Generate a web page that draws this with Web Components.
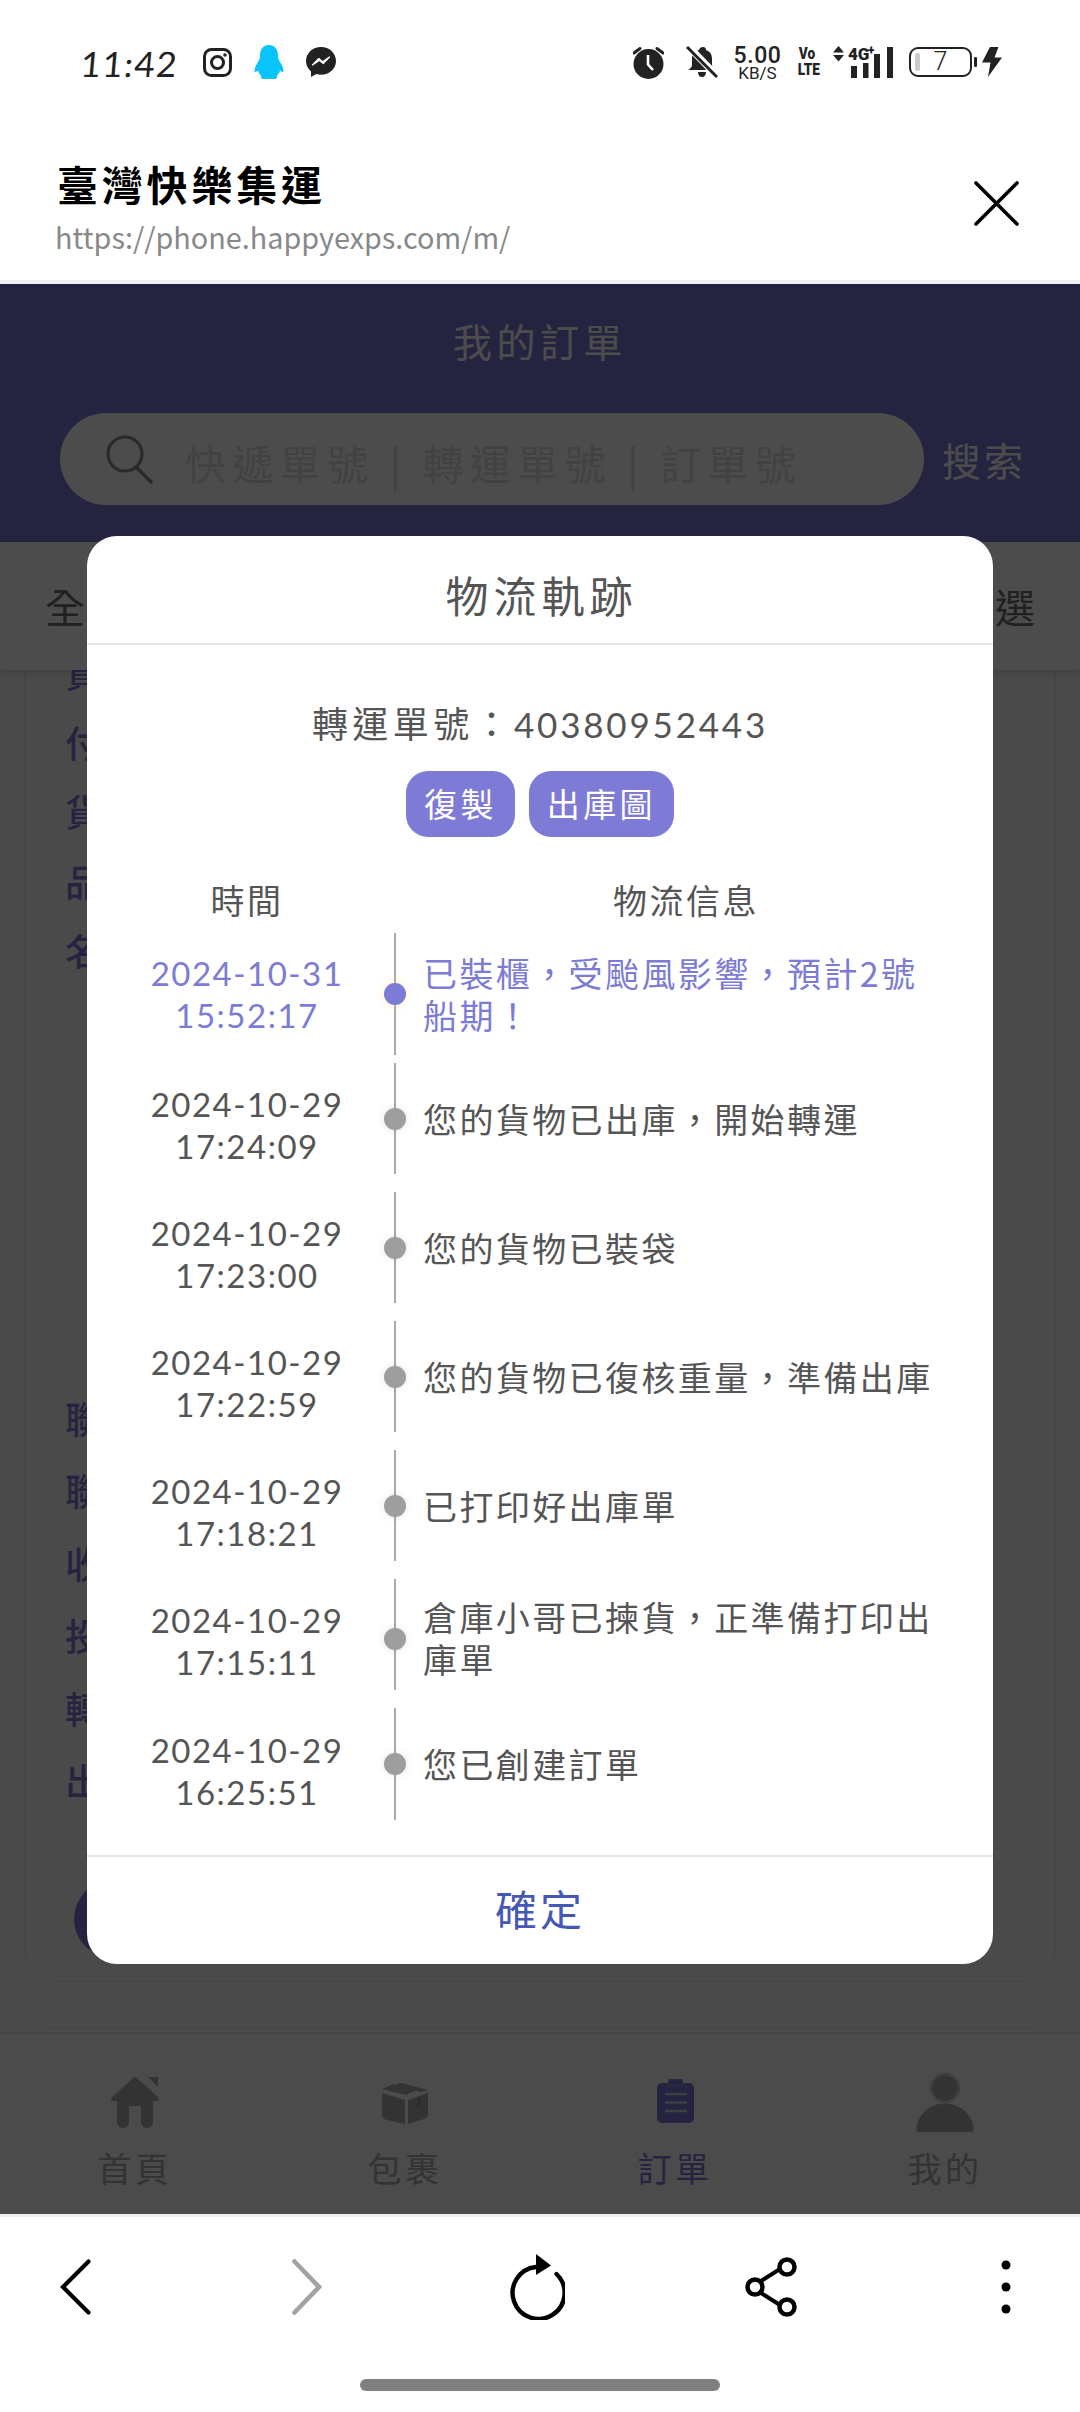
<!DOCTYPE html>
<html lang="zh-Hant">
<head>
<meta charset="utf-8">
<title>物流軌跡</title>
<style>
html,body{margin:0;padding:0;background:#fff}
body{width:1080px;height:2412px;overflow:hidden;font-family:"Noto Sans CJK SC","Noto Sans CJK TC",sans-serif;display:flex;flex-direction:column}
</style>
</head>
<body>
<phone-status></phone-status>
<browser-head>
  <span slot="title">臺灣快樂集運</span>
  <span slot="url">https://phone.happyexps.com/m/</span>
</browser-head>
<order-page>
  <page-head></page-head>
  <tab-strip><span>全</span><span>選</span></tab-strip>
  <order-list>
    <order-card>
      <card-line>貨</card-line><card-line>付</card-line><card-line>貨</card-line><card-line>品</card-line><card-line>名</card-line>
      <card-line wide class="gap">聯</card-line><card-line wide>聯</card-line><card-line wide>收</card-line><card-line wide>投</card-line><card-line wide>轉</card-line><card-line wide>出</card-line>
    </order-card>
  </order-list>
  <tab-nav></tab-nav>
  <track-modal>
    <span slot="title">物流軌跡</span>
    <span slot="number">轉運單號&#xFF1A;<b style="font-weight:400;font-family:Lato,sans-serif;font-size:35px;letter-spacing:2.800px">40380952443</b></span>
    <track-btn slot="actions">復製</track-btn>
    <track-btn slot="actions">出庫圖</track-btn>
    <span slot="col1">時間</span>
    <span slot="col2">物流信息</span>
    <track-row slot="rows" active first><span slot="time">2024-10-31<br>15:52:17</span>已裝櫃&#xFF0C;受颱風影響&#xFF0C;預計2號船期&#xFF01;</track-row>
    <track-row slot="rows"><span slot="time">2024-10-29<br>17:24:09</span>您的貨物已出庫&#xFF0C;開始轉運</track-row>
    <track-row slot="rows"><span slot="time">2024-10-29<br>17:23:00</span>您的貨物已裝袋</track-row>
    <track-row slot="rows"><span slot="time">2024-10-29<br>17:22:59</span>您的貨物已復核重量&#xFF0C;準備出庫</track-row>
    <track-row slot="rows"><span slot="time">2024-10-29<br>17:18:21</span>已打印好出庫單</track-row>
    <track-row slot="rows" two><span slot="time">2024-10-29<br>17:15:11</span>倉庫小哥已揀貨&#xFF0C;正準備打印出庫單</track-row>
    <track-row slot="rows" last><span slot="time">2024-10-29<br>16:25:51</span>您已創建訂單</track-row>
    <span slot="confirm">確定</span>
  </track-modal>
</order-page>
<browser-bar></browser-bar>
<script>
const def=(name,html)=>customElements.define(name,class extends HTMLElement{
  constructor(){super();this.attachShadow({mode:'open'}).innerHTML=html}
});

def('phone-status',`<style>
:host{display:flex;align-items:center;height:100px;box-sizing:border-box;padding:24px 78px 0 79px;color:#222;flex:none}
.t{width:96px;font-family:Lato,sans-serif;font-size:35px;line-height:44px;letter-spacing:1.500px;white-space:nowrap;margin-top:2px;transform:skewX(-5deg);transform-origin:left bottom}
svg{display:block;flex:none}
.sp{flex:1}
.speed{width:51px;margin-left:14px;text-align:center;font-family:Roboto,sans-serif;color:#222;white-space:nowrap}
.speed div:first-child{font-size:23px;line-height:22px;font-weight:500;letter-spacing:.6px;margin-top:3px}
.speed div:last-child{font-size:17px;line-height:18px;margin-top:-3px}
.volte{width:22px;margin-left:13px;font-family:Roboto,sans-serif;font-weight:900;text-align:center;color:#222}
.volte div{font-size:16px;line-height:16px;transform:scaleX(.85)}
.sig{width:60px;height:32px;margin-left:15px;position:relative;flex:none}
.sig svg{position:absolute;left:0;top:0}
.sig span{position:absolute;font-family:Roboto,sans-serif;font-weight:900;color:#222;line-height:1.2}
.bat{position:relative;margin-left:16px;margin-right:3px;text-align:center;font-family:Roboto,sans-serif;font-weight:300;font-size:25px;line-height:26px;color:#222;flex:none;box-sizing:border-box;border:2.400px solid #222;border-radius:9px;height:30px;width:63px}
.bat::before{content:"";position:absolute;left:4px;top:4px;width:5px;height:18px;border-radius:2px;background:#ccc}
.bat::after{content:"";position:absolute;right:-7px;top:8px;width:3px;height:10px;border-radius:1px;background:#222}
</style>
<span class="t">11:42</span>
<svg style="margin-left:28px" width="29" height="29" viewBox="0 0 29 29"><rect x="1.500" y="1.500" width="26" height="26" rx="7" fill="none" stroke="#222" stroke-width="3"/><circle cx="14.500" cy="14.500" r="6" fill="none" stroke="#222" stroke-width="3"/><circle cx="22" cy="7" r="1.800" fill="#222"/></svg>
<svg style="margin-left:22px" width="30" height="34" viewBox="0 0 30 34"><path d="M15 0C8.500 0 6 5 6 11C6 13 5.500 14.500 4 17C2 20 .5 23 .5 26C.5 27 2 27.500 4 25.500C4.500 28 6 30 7.500 31C6 32 7 34 10 34H20C23 34 24 32 22.500 31C24 30 25.500 28 26 25.500C28 27.500 29.500 27 29.500 26C29.500 23 28 20 26 17C24.500 14.500 24 13 24 11C24 5 21.500 0 15 0Z" fill="#08c4fb"/></svg>
<svg style="margin-left:22px" width="30" height="30" viewBox="0 0 30 30"><path d="M15 0C6.700 0 0 6.200 0 14C0 18.200 1.900 21.800 5 24.400V30L10.300 27.100C11.800 27.600 13.400 27.800 15 27.800C23.300 27.800 30 21.700 30 14C30 6.200 23.300 0 15 0Z" fill="#222"/><path d="M6.500 18L12.800 11.500L16.600 14.800L23.500 10L17.200 16.600L13.400 13.300Z" fill="#fff" stroke="#fff" stroke-width="1.200" stroke-linejoin="round"/></svg>
<span class="sp"></span>
<svg width="31" height="33" viewBox="0 0 31 33"><circle cx="15.500" cy="18" r="15" fill="#222"/><path d="M15 9V18.500L20 24" fill="none" stroke="#fff" stroke-width="2.600"/><path d="M1 7L7 2.500M30 7L24 2.500" stroke="#222" stroke-width="3" stroke-linecap="round"/></svg>
<svg style="margin-left:22px" width="32" height="32" viewBox="0 0 32 32"><path d="M17 1C19 1 20 2 20 4C24.500 5.500 26 9 26 13V19C26 21 28 22.500 29.500 24H2.500C4 22.500 6 21 6 19V12C6 8 9 5 13 4C13.500 2 15 1 17 1ZM12 26H20C20 29 18.500 31 16 31C13.500 31 12 29 12 26Z" fill="#222"/><path d="M1 -1L31 30" stroke="#fff" stroke-width="7"/><path d="M1 1L31 31" stroke="#222" stroke-width="3"/></svg>
<div class="speed"><div>5.00</div><div>KB/S</div></div>
<div class="volte"><div>Vo</div><div>LTE</div></div>
<div class="sig"><svg width="60" height="32" viewBox="0 0 60 32"><path d="M0 6.500L5.500 0L11 6.500ZM0 9L11 9L5.500 15.500Z" fill="#222"/><rect x="18" y="20" width="6" height="12" fill="#222"/><rect x="30" y="17" width="5.500" height="15" fill="#222"/><rect x="41" y="8" width="6" height="24" fill="#222"/><rect x="54" y="1" width="6" height="31" fill="#222"/></svg><span style="left:15px;top:-2px;font-size:17px">4G</span><span style="left:35px;top:-3px;font-size:12px">+</span></div>
<div class="bat">7</div>
<svg style="margin-left:7px" width="20" height="30" viewBox="0 0 20 30"><path d="M8 0H16.500L12.500 10.500H20L6 30L8.500 15.500H0Z" fill="#222"/></svg>`);

def('browser-head',`<style>
:host{display:flex;height:184px;box-sizing:border-box;border-bottom:4px solid #eef0f3;padding:0 61px 0 57px;align-items:flex-start;justify-content:space-between;flex:none;background:#fff}
.col{display:flex;flex-direction:column;margin-top:53px}
.tt{font-size:41px;line-height:60px;font-weight:700;letter-spacing:3.800px;color:#000}
.u{font-size:28.800px;line-height:42px;color:#888;margin-top:3px;margin-left:-2px;white-space:nowrap}
svg{margin-top:81px;display:block}
</style>
<div class="col"><div class="tt"><slot name="title"></slot></div><div class="u"><slot name="url"></slot></div></div>
<svg width="45" height="45" viewBox="0 0 45 45"><path d="M2 2L43 43M43 2L2 43" stroke="#000" stroke-width="3.600" stroke-linecap="round"/></svg>`);

def('order-page',`<style>
:host{display:flex;flex-direction:column;height:1930px;position:relative;background:#f7f7f7;flex:none;overflow:hidden}
</style><slot></slot>`);

def('page-head',`<style>
:host{display:block;height:258px;background:#7d7bd5;flex:none;box-sizing:border-box;padding-top:26px}
.t{text-align:center;color:#fff;font-size:39px;line-height:60px;letter-spacing:4.500px}
.r{display:flex;align-items:center;margin:43px 0 0 60px}
.s{width:864px;height:92px;border-radius:46px;background:#fff;display:flex;align-items:center;box-sizing:border-box;padding-left:44px}
.s svg{display:block;flex:none}
.p{margin-left:31px;margin-top:6px;font-size:41px;line-height:60px;letter-spacing:6.300px;color:#dcdcdc;white-space:nowrap}
.b{margin-left:18px;color:#fff;font-size:39px;line-height:54px;letter-spacing:3px;white-space:nowrap}
</style>
<div class="t">我的訂單</div>
<div class="r"><div class="s"><svg width="50" height="50" viewBox="0 0 50 50"><circle cx="21" cy="20" r="17" fill="none" stroke="#8c8c8c" stroke-width="3.200"/><path d="M32 33L47 48" stroke="#8c8c8c" stroke-width="3.600" stroke-linecap="round"/></svg><span class="p">快遞單號 | 轉運單號 | 訂單號</span></div><span class="b">搜索</span></div>`);

def('tab-strip',`<style>
:host{display:flex;height:128px;flex:none;background:#fff;justify-content:space-between;align-items:center;padding:0 45px;box-sizing:border-box;font-size:40px;color:#6c6c6c;box-shadow:0 3px 8px rgba(0,0,0,.12);position:relative;z-index:1}
</style><slot></slot>`);

def('order-list',`<style>
:host{display:block;flex:1;min-height:0;overflow:hidden;padding:0 24px;box-sizing:border-box}
.next{height:20px;margin-top:46px;border:1.500px solid rgba(0,0,0,.06);border-bottom:none;border-radius:30px 30px 0 0}
</style><slot></slot><div class="next"></div>`);

def('order-card',`<style>
:host{margin-top:-32px;height:1344px;box-sizing:border-box;border:1.500px solid rgba(0,0,0,.06);border-top:none;border-radius:0 0 30px 30px;padding-left:40px;position:relative;display:flex;flex-direction:column}
.rule{height:2px;background:rgba(0,0,0,.05);margin:30px 16px 0 -23px}
.btn{width:830px;height:78px;border-radius:39px;background:#7d7bd5;margin:31px 0 0 9px}
</style><slot></slot><div class="rule"></div><div class="btn"></div>`);

def('card-line',`<style>
:host{display:block;height:69.500px;line-height:69.500px;font-size:37px;font-weight:500;color:#7d7bd5;flex:none;white-space:nowrap}
:host([wide]){height:72.500px;line-height:72.500px}
:host(.gap){margin-top:396px}
</style><slot></slot>`);

const navIcon={
 home:`<svg width="48" height="52" viewBox="0 0 48 52"><path d="M24 3L46 23H2Z" fill="#aaa" stroke="#aaa" stroke-width="4" stroke-linejoin="round"/><path d="M6 22H42V46A6 6 0 0 1 30 46V30H18V46A6 6 0 0 1 6 46Z" fill="#aaa"/><path d="M37 1H47V11Z" fill="#aaa"/></svg>`,
 box:`<svg width="46" height="42" viewBox="0 0 46 42"><path d="M0 10L23 17V41L5 37Q0 36 0 31Z" fill="#aaa"/><path d="M26 17L46 10V31Q46 35 42 36L26 41Z" fill="#aaa"/><path d="M0 6L12 1L35 7L24 12ZM17 0L20 0L46 7L39 9L15 2Z" fill="#aaa"/><path d="M35 15V24L39 22V14" fill="#777" opacity=".5"/></svg>`,
 clip:`<svg width="37" height="44" viewBox="0 0 37 44"><rect x="0" y="4" width="37" height="40" rx="5" fill="#7d7bd5"/><rect x="11" y="0" width="15" height="7" rx="1.500" fill="#7d7bd5" stroke="#fff" stroke-opacity=".2"/><path d="M8 15H30M8 23.500H30M8 32H30" stroke="#d0d0d0" stroke-width="2.600"/></svg>`,
 me:`<svg width="58" height="59" viewBox="0 0 58 59"><circle cx="29" cy="15" r="14.500" fill="none" stroke="#aaa" stroke-width="1"/><circle cx="29" cy="15" r="13" fill="#aaa"/><path d="M1 57C1 42 14 31 29 31C44 31 57 42 57 57C57 58 56 58.500 55 58.500H3C2 58.500 1 58 1 57Z" fill="#aaa" stroke="#aaa" stroke-width="1"/></svg>`
};
def('tab-nav',`<style>
:host{display:grid;grid-template-columns:repeat(4,270px);height:182px;box-sizing:border-box;background:#fbfbfb;border-top:2px solid rgba(0,0,0,.05);flex:none;color:#aaa}
.i{display:flex;flex-direction:column;align-items:center}
.ic{height:62px;margin-top:38px;display:flex;justify-content:center;align-items:flex-start;box-sizing:content-box}
.ic svg{display:block}
.i span{font-size:34px;line-height:46px;letter-spacing:3.500px;margin-top:11px;white-space:nowrap}
.on{color:#7d7bd5}
</style>
<div class="i"><div class="ic" style="padding-top:4px;height:58px">${navIcon.home}</div><span>首頁</span></div>
<div class="i"><div class="ic" style="padding-top:11px;height:51px">${navIcon.box}</div><span>包裹</span></div>
<div class="i on"><div class="ic" style="padding-top:7px;height:55px">${navIcon.clip}</div><span>訂單</span></div>
<div class="i"><div class="ic" style="padding-top:1px;height:61px">${navIcon.me}</div><span>我的</span></div>`);

def('track-modal',`<style>
:host{position:absolute;inset:0;background:rgba(0,0,0,.7);display:block;z-index:5}
.m{position:absolute;left:87px;top:252px;width:906px;height:1428px;background:#fff;border-radius:30px;display:flex;flex-direction:column;color:#555;overflow:hidden}
.h{height:109px;box-sizing:border-box;border-bottom:2px solid #e6e6e6;text-align:center;font-size:43px;line-height:116px;letter-spacing:5px;flex:none;overflow:hidden;padding-left:3px}
.b{flex:1;min-height:0;display:flex;flex-direction:column;padding:52px 0 0 13px;box-sizing:border-box}
.n{text-align:center;font-size:36px;line-height:50px;letter-spacing:4.400px;margin-left:-13px;white-space:nowrap}
.a{display:flex;justify-content:center;gap:14px;margin-top:22px;margin-left:-13px}
.c{display:flex;margin-top:38px;font-size:34px;line-height:50px;letter-spacing:2.500px}
.c1{width:294px;text-align:center}
.c2{width:526px;margin-left:29px;text-align:center}
.rows{margin-top:8px;display:flex;flex-direction:column}
.f{height:109px;box-sizing:border-box;border-top:2px solid #e6e6e6;text-align:center;color:#4558b8;font-size:42px;line-height:102px;letter-spacing:3px;flex:none}
</style>
<div class="m">
<div class="h"><slot name="title"></slot></div>
<div class="b">
<div class="n"><slot name="number"></slot></div>
<div class="a"><slot name="actions"></slot></div>
<div class="c"><div class="c1"><slot name="col1"></slot></div><div class="c2"><slot name="col2"></slot></div></div>
<div class="rows"><slot name="rows"></slot></div>
</div>
<div class="f"><slot name="confirm"></slot></div>
</div>`);

def('track-btn',`<style>
:host{display:block;height:66px;padding:0 18px;border-radius:22px;background:#7d7bd5;color:#fff;font-size:33px;line-height:64px;letter-spacing:3.400px;white-space:nowrap}
</style><slot></slot>`);

def('track-row',`<style>
:host{display:flex;height:111px;margin-bottom:18px;color:#555;align-items:center;flex:none}
:host([first]){height:122px;margin-bottom:8px}
:host([last]){margin-bottom:0;height:112px}
:host([active]){color:#7c7bd5}
.t{width:294px;text-align:center;font-family:Lato,sans-serif;font-size:33px;line-height:42px;letter-spacing:1.500px;white-space:nowrap;flex:none;box-sizing:border-box;padding-top:13px}
:host([first]) .t{padding-top:0}
.l{width:2px;align-self:stretch;background:#aaa;position:relative;flex:none}
.d{position:absolute;left:-10px;top:50%;margin-top:-11px;width:22px;height:22px;border-radius:50%;background:#9e9e9e;box-shadow:0 0 8px rgba(0,0,0,.1)}
:host([two]) .d{margin-top:-7px}
:host([active]) .d{background:#7c7bd5;box-shadow:0 0 10px rgba(255,200,90,.35)}
.x{width:526px;margin-left:27px;font-size:34px;line-height:42px;letter-spacing:2.400px;flex:none;box-sizing:border-box}
:host([two]) .x{padding-top:7px}
</style>
<div class="t"><slot name="time"></slot></div><div class="l"><div class="d"></div></div><div class="x"><slot></slot></div>`);

def('browser-bar',`<style>
:host{display:block;flex:none;height:198px;background:#fff;border-top:3px solid #eef0f3;box-sizing:border-box}
.r{display:flex;align-items:center;height:140px;padding-left:60px}
svg{display:block;flex:none}
.home{width:360px;height:12px;border-radius:6px;background:#808080;margin:22px auto 0}
</style>
<div class="r">
<svg width="31" height="56" viewBox="0 0 31 56"><path d="M28.500 2.500L3 28L28.500 53.500" fill="none" stroke="#000" stroke-width="4.200" stroke-linecap="round" stroke-linejoin="miter"/></svg>
<svg style="margin-left:201px" width="30" height="56" viewBox="0 0 30 56"><path d="M2.500 2.500L27 28L2.500 53.500" fill="none" stroke="#a3a3a3" stroke-width="4.600" stroke-linecap="round"/></svg>
<svg style="margin-left:185px" width="58" height="66" viewBox="0 0 58 66"><path d="M49.500 20A26 26 0 1 1 29 13" fill="none" stroke="#000" stroke-width="4.400" stroke-linecap="round"/><path d="M29 0L44 11.500L29 21Z" fill="#000"/></svg>
<svg style="margin-left:179px" width="54" height="62" viewBox="0 0 54 62"><path d="M17 25L36 13M17 37L36 49" stroke="#000" stroke-width="4"/><circle cx="43" cy="11" r="7.500" fill="none" stroke="#000" stroke-width="4.500"/><circle cx="11" cy="31" r="7.500" fill="none" stroke="#000" stroke-width="4.500"/><circle cx="43" cy="51" r="7.500" fill="none" stroke="#000" stroke-width="4.500"/></svg>
<svg style="margin-left:203px" width="10" height="54" viewBox="0 0 10 54"><circle cx="5" cy="5" r="4.500"/><circle cx="5" cy="27" r="4.500"/><circle cx="5" cy="49" r="4.500"/></svg>
</div>
<div class="home"></div>`);
</script>
</body>
</html>
